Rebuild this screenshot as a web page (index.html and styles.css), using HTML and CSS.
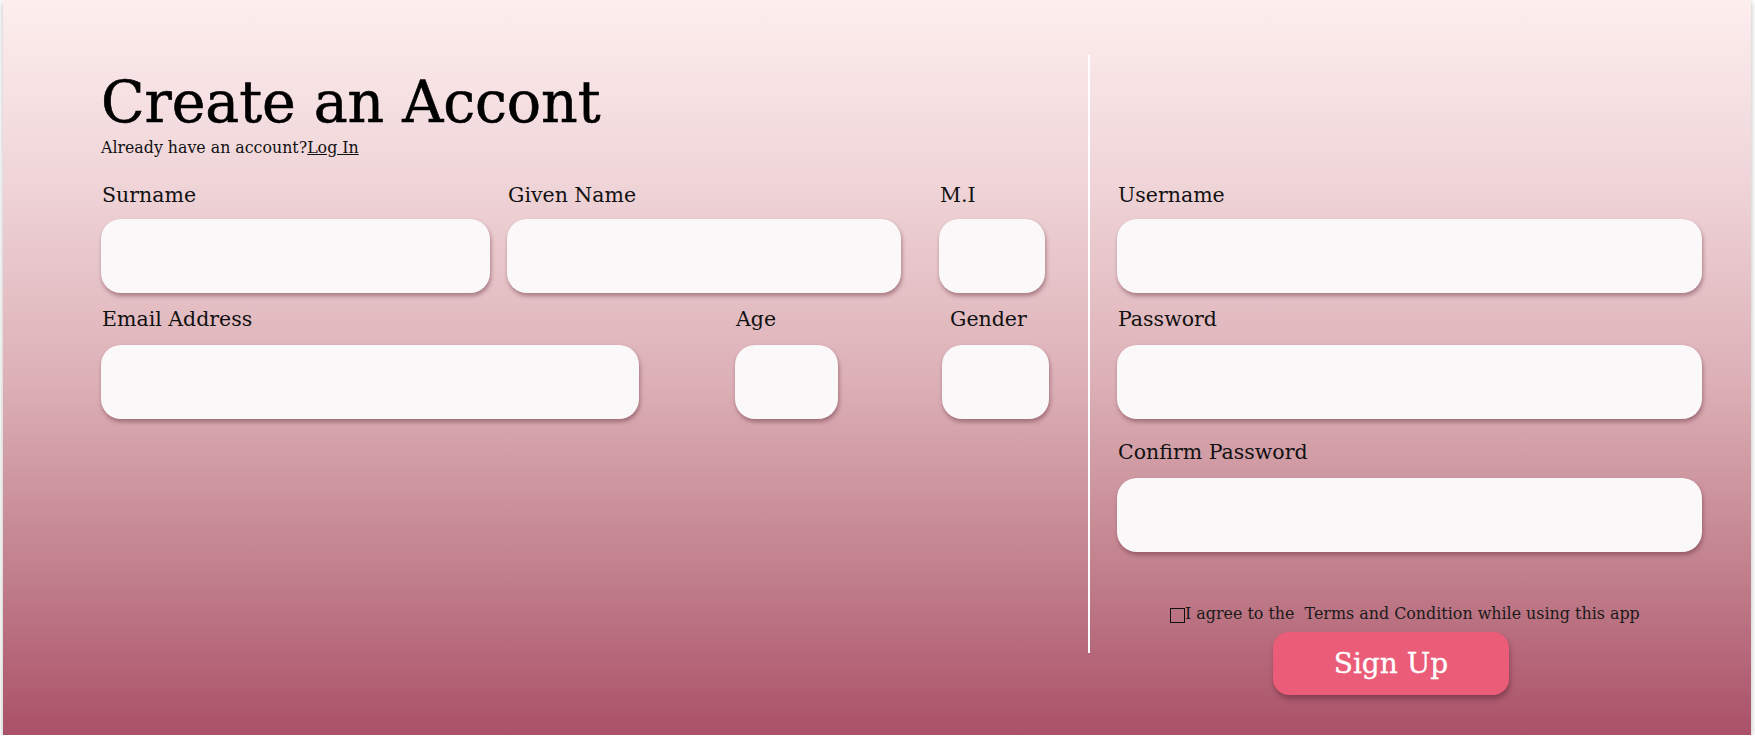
FILE: index.html
```html
<!DOCTYPE html>
<html lang="en">
<head>
<meta charset="utf-8">
<title>Create an Account</title>
<link rel="stylesheet" href="styles.css">
</head>
<body>
<div class="card">
  <section class="left">
    <h1 class="title">Create an Accont</h1>
    <p class="sub">Already have an account?<a class="login" href="#">Log In</a></p>
    <div class="row row1">
      <div class="field f-surname"><label class="lbl">Surname</label><div class="input"></div></div>
      <div class="field f-given"><label class="lbl">Given Name</label><div class="input"></div></div>
      <div class="field f-mi"><label class="lbl">M.I</label><div class="input"></div></div>
    </div>
    <div class="row row2">
      <div class="field f-email"><label class="lbl">Email Address</label><div class="input"></div></div>
      <div class="field f-age"><label class="lbl">Age</label><div class="input"></div></div>
      <div class="field f-gender"><label class="lbl lbl-gender">Gender</label><div class="input"></div></div>
    </div>
  </section>
  <div class="divider"></div>
  <section class="right">
    <div class="field"><label class="lbl">Username</label><div class="input"></div></div>
    <div class="field f-pass"><label class="lbl">Password</label><div class="input"></div></div>
    <div class="field f-confirm"><label class="lbl">Confirm Password</label><div class="input"></div></div>
    <div class="agree"><span class="box"></span><span>I agree to the&nbsp; Terms and Condition while using this app</span></div>
    <button class="signup">Sign Up</button>
  </section>
</div>
</body>
</html>
```
FILE: styles.css
```css
html, body {
  margin: 0;
  padding: 0;
  background: #ffffff;
}
body {
  font-family: "DejaVu Serif", "Liberation Serif", serif;
  color: #111;
}
.card {
  margin-left: 3px;
  width: 1748px;
  height: 735px;
  display: flex;
  align-items: flex-start;
  background: linear-gradient(to bottom, #fdeeee 0%, #efd4d8 25%, #dcb0b6 52%, #c3838f 76%, #aa5167 100%);
  box-shadow: 0 2px 6px rgba(0, 0, 0, 0.28);
}
.left {
  width: 987px;
  padding: 69px 0 0 98px;
}
.title {
  margin: 0;
  font-size: 57px;
  line-height: 66px;
  font-weight: normal;
  color: #000;
  letter-spacing: -0.1px;
  -webkit-text-stroke: 0.6px #000;
}
.sub {
  margin: 4px 0 0 0;
  font-size: 15.8px;
  line-height: 18px;
  color: #111;
}
.login {
  color: #111;
  text-decoration: underline;
}
.row {
  display: flex;
  align-items: flex-start;
}
.row1 {
  margin-top: 26px;
}
.row2 {
  margin-top: 14px;
}
.row2 .lbl {
  margin-bottom: 14px;
}
.field {
  display: flex;
  flex-direction: column;
}
.lbl {
  display: block;
  font-size: 20.5px;
  line-height: 24px;
  color: #111;
  margin-bottom: 12px;
  padding-left: 1px;
}
.input {
  height: 74px;
  background: #faf8f9;
  border-radius: 20px;
  box-shadow: 1px 3px 4px rgba(95, 40, 55, 0.45);
}
.f-surname { width: 389px; margin-right: 17px; }
.f-given { width: 394px; margin-right: 38px; }
.f-mi { width: 106px; }
.f-email { width: 538px; margin-right: 96px; }
.f-age { width: 103px; margin-right: 104px; }
.f-gender { width: 107px; }
.lbl-gender { padding-left: 8px; }
.divider {
  width: 2px;
  height: 598px;
  margin-top: 55px;
  background: #ffffff;
}
.right {
  width: 585px;
  padding: 183px 0 0 27px;
  display: flex;
  flex-direction: column;
}
.f-pass { margin-top: 14px; }
.f-pass .lbl { margin-bottom: 14px; }
.f-confirm { margin-top: 21px; }
.f-confirm .lbl { margin-bottom: 14px; }
.agree {
  margin-top: 53px;
  margin-left: 53px;
  display: flex;
  align-items: center;
  font-size: 15.9px;
  line-height: 18px;
  color: #1a1a1a;
  white-space: nowrap;
}
.box {
  width: 15px;
  height: 15px;
  border: 1px solid #111;
  box-sizing: border-box;
  margin-top: 2px;
}
.signup {
  margin-top: 9px;
  margin-left: 156px;
  width: 236px;
  height: 63px;
  border: none;
  border-radius: 16px;
  background: #ea5c78;
  color: #ffffff;
  font-family: "DejaVu Serif", "Liberation Serif", serif;
  font-size: 28px;
  line-height: 63px;
  padding: 0;
  box-shadow: 1px 4px 5px rgba(80, 30, 45, 0.45);
  -webkit-text-stroke: 0.3px #ffffff;
}
```
